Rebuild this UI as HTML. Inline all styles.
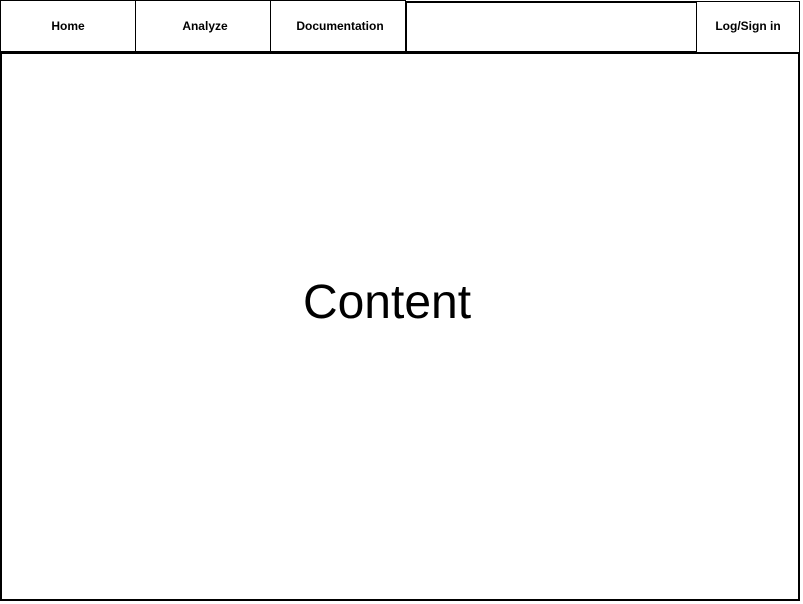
<!DOCTYPE html>
<html><head><style>
body{margin:0;width:803px;height:604px;background:#fff;position:relative;font-family:"Liberation Sans",Arial,sans-serif;overflow:hidden}
.b{position:absolute;box-sizing:border-box;border:1px solid #000;display:flex;align-items:center;justify-content:center;font-size:12px;font-weight:bold;color:#000;background:#fff}
</style></head><body>
<div class="b" style="left:0;top:52px;width:800px;height:549px;border-width:2px;font-weight:normal;font-size:48px;"><span style="position:relative;left:-13px;top:-24px">Content</span></div>
<div class="b" style="left:0;top:0;width:136px;height:53px;border-bottom-width:2px">Home</div>
<div class="b" style="left:135px;top:0;width:136px;height:53px;border-bottom-width:2px"><span style="position:relative;left:2px">Analyze</span></div>
<div class="b" style="left:270px;top:0;width:136px;height:53px;border-bottom-width:2px"><span style="position:relative;left:2px">Documentation</span></div>
<div class="b" style="left:405px;top:1px;width:293px;height:52px;border-width:2px"></div>
<div class="b" style="left:697px;top:1px;width:103px;height:52px;border-left:none"><span style="position:relative;top:-1px">Log/Sign in</span></div>
</body></html>
